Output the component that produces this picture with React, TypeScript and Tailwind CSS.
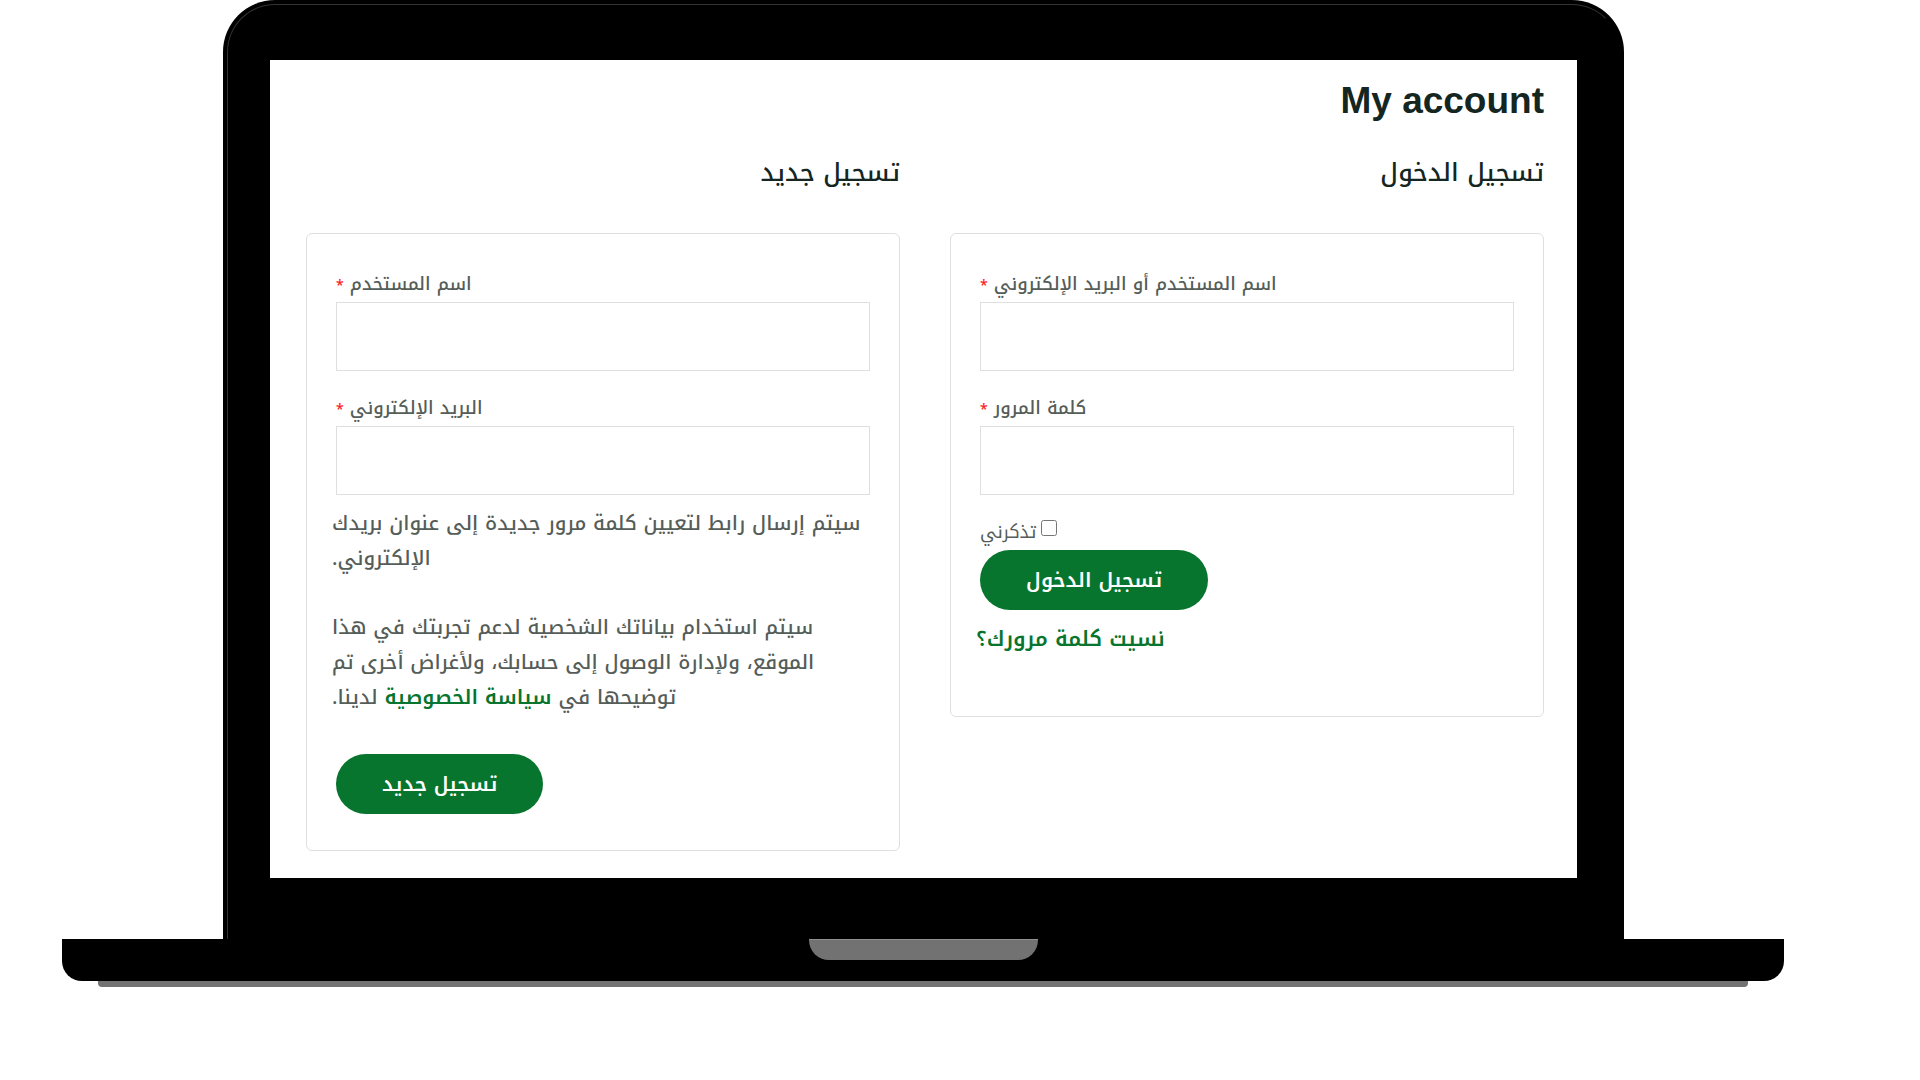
import type { ReactNode } from "react";

type FieldProps = {
  id: string;
  label: string;
  type?: string;
};

const Field = ({ id, label, type = "text" }: FieldProps) => (
  <div className="mb-[19px]">
    <label
      htmlFor={id}
      className="block text-left text-[18px] leading-9 font-medium text-[#555d59]"
    >
      {label} <span className="text-[14px] leading-none text-[#ff1a1a]">*</span>
    </label>
    <input
      id={id}
      type={type}
      required
      className="block h-[69px] w-full border border-[#dfdfdf] bg-white px-4 text-lg outline-none focus:border-[#07752e]"
    />
  </div>
);

const SubmitButton = ({ children }: { children: ReactNode }) => (
  <button
    type="submit"
    className="h-[60px] rounded-full bg-[#07752e] px-[46px] text-[20px] font-semibold whitespace-nowrap text-white"
  >
    {children}
  </button>
);

const Panel = ({ title, children }: { title: string; children: ReactNode }) => (
  <section className="flex-1">
    <h2 className="mb-[42px] text-[25px] leading-[36px] font-medium text-[#14261f]">
      {title}
    </h2>
    <form
      onSubmit={(e) => e.preventDefault()}
      className="rounded-md border border-[#dfdfdf] px-[29px] pt-8"
    >
      {children}
    </form>
  </section>
);

const AccountPage = () => (
  <div
    dir="rtl"
    className="bg-white pt-[19px] pr-[33px] pb-[27px] pl-9 font-['Noto_Kufi_Arabic','Noto_Sans_Arabic','DejaVu_Sans',sans-serif]"
  >
    <h1 className="mb-8 font-['Liberation_Sans',Arial,sans-serif] text-[37px] leading-[44px] font-bold text-[#14261f]">
      My account
    </h1>

    <div className="flex items-start gap-[50px]">
      <Panel title="تسجيل الدخول">
        <Field id="login" label="اسم المستخدم أو البريد الإلكتروني" />
        <Field id="password" label="كلمة المرور" type="password" />
        <div className="flex flex-col items-end pb-[59px]">
          <label className="flex h-9 items-center gap-1 text-[18px] leading-8 text-[#555d59]">
            <input type="checkbox" className="mb-2 size-4" />
            تذكرني
          </label>
          <SubmitButton>تسجيل الدخول</SubmitButton>
          <a
            href="#"
            className="-ml-1 mt-3 text-[21px] leading-[35px] font-semibold text-[#07752e]"
          >
            نسيت كلمة مرورك؟
          </a>
        </div>
      </Panel>

      <Panel title="تسجيل جديد">
        <Field id="username" label="اسم المستخدم" />
        <Field id="email" label="البريد الإلكتروني" type="email" />
        <div className="-mt-2 pb-9 text-left">
          <div className="-ml-1 mb-[39px] text-[20px] leading-[35px] font-medium text-[#555d59]">
            <p className="mb-[34px]">
              سيتم إرسال رابط لتعيين كلمة مرور جديدة إلى عنوان بريدك
              <br />
              الإلكتروني.
            </p>
            <p>
              سيتم استخدام بياناتك الشخصية لدعم تجربتك في هذا
              <br />
              الموقع، ولإدارة الوصول إلى حسابك، ولأغراض أخرى تم
              <br />
              توضيحها في{" "}
              <a href="#" className="font-semibold text-[#07752e]">
                سياسة الخصوصية
              </a>{" "}
              لدينا.
            </p>
          </div>
          <SubmitButton>تسجيل جديد</SubmitButton>
        </div>
      </Panel>
    </div>
  </div>
);

const App = () => {
  return (
    <div className="min-h-screen bg-white pr-[136px] pl-[62px]">
      {/* Lid */}
      <div className="mr-40 ml-[161px] rounded-t-[52px] bg-black px-1 pt-1">
        <div className="rounded-t-[48px] border-t border-r border-l border-[#333] border-r-black px-[42px] pt-[55px] pb-[61px]">
          <AccountPage />
        </div>
      </div>

      {/* Base */}
      <div className="flex h-[42px] justify-center rounded-b-[20px] bg-black">
        <div className="h-[21px] w-[229px] rounded-b-[20px] border-t border-[#8f8f8f] bg-[#727272]" />
      </div>
      <div className="mx-9 h-[6px] rounded-b-sm bg-[#727272]" />
    </div>
  );
};

export default App;
